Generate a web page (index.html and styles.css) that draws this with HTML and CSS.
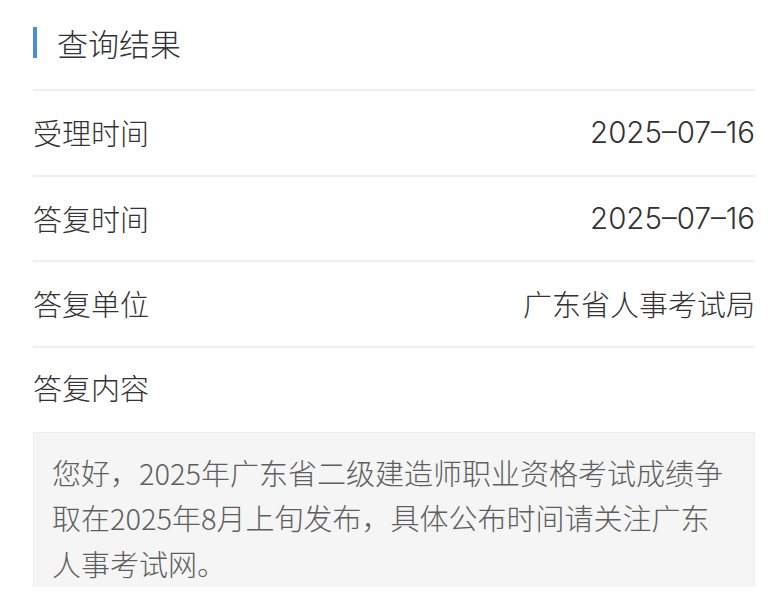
FILE: index.html
```html
<!DOCTYPE html>
<html lang="zh-CN">
<head>
<meta charset="utf-8">
<link rel="stylesheet" href="styles.css">
</head>
<body>
<div class="page">
  <div class="header">
    <span class="bar"></span>
    <h1 class="title">查询结果</h1>
  </div>
  <div class="row">
    <span class="label">受理时间</span>
    <span class="value num">2025–07–16</span>
  </div>
  <div class="row">
    <span class="label">答复时间</span>
    <span class="value num">2025–07–16</span>
  </div>
  <div class="row">
    <span class="label">答复单位</span>
    <span class="value">广东省人事考试局</span>
  </div>
  <div class="row row-content">
    <span class="label">答复内容</span>
  </div>
  <div class="content">您好，2025年广东省二级建造师职业资格考试成绩争取在2025年8月上旬发布，具体公布时间请关注广东人事考试网。</div>
</div>
</body>
</html>
```

FILE: styles.css
```css
html, body {
  margin: 0;
  padding: 0;
  background: #ffffff;
}
body {
  font-family: "Noto Sans CJK SC", "Noto Sans", sans-serif;
  font-weight: 300;
  color: #333333;
}
.page {
  padding: 0 15px 0 33px;
  height: 598px;
  overflow: hidden;
}
.header {
  display: flex;
  align-items: center;
  height: 89px;
  box-sizing: border-box;
  padding-bottom: 4px;
}
.bar {
  width: 4px;
  height: 31px;
  background: #4a8ed6;
  margin-right: 20px;
}
.title {
  margin: 0;
  font-size: 31px;
  font-weight: 300;
  line-height: 1;
  color: #333333;
}
.row {
  display: flex;
  justify-content: space-between;
  align-items: center;
  height: 83.5px;
  border-top: 2px solid #efefef;
}
.label, .value {
  font-size: 29px;
  line-height: 1;
}
.value.num {
  font-family: Inter, "Noto Sans CJK SC", sans-serif;
  font-size: 29.5px;
  font-weight: 300;
}
.row-content {
  height: 80px;
  margin-bottom: 4px;
}
.content {
  background: #f5f5f5;
  border: 1px solid #ececec;
  border-bottom: none;
  padding: 17px 19px 0 18px;
  font-size: 29px;
  line-height: 45.5px;
  color: #5e5e5e;
  height: 137px;
  overflow: hidden;
}
```
